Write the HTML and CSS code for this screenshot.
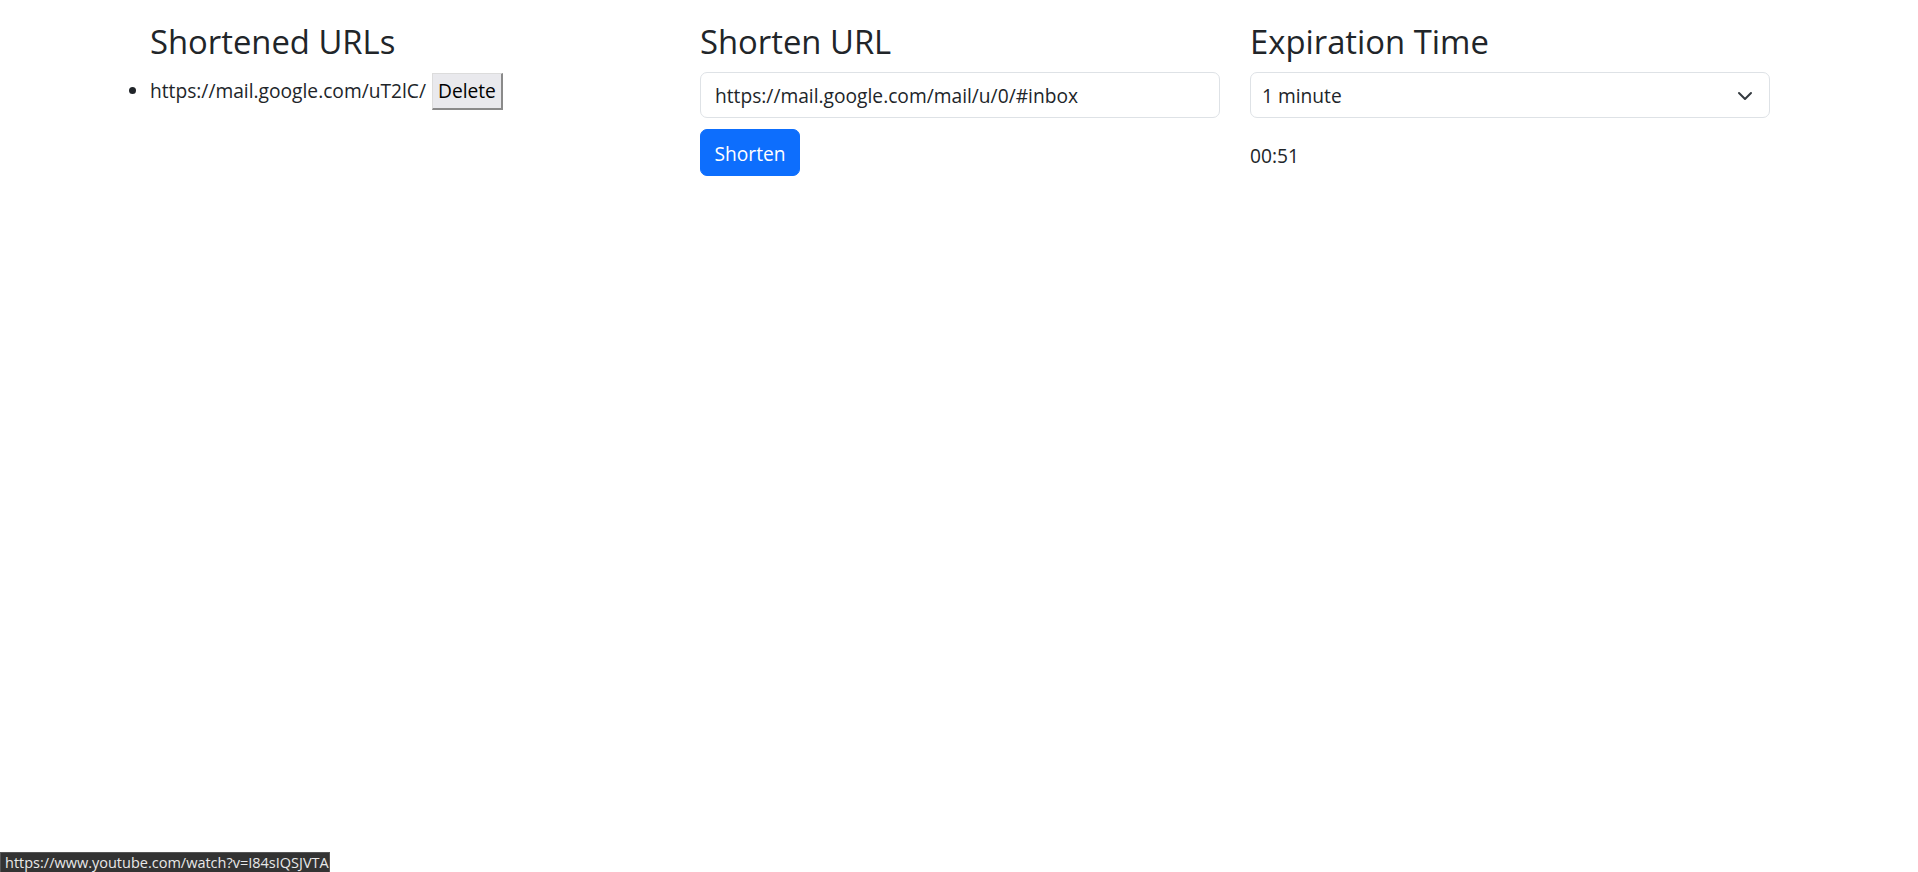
FILE: index.html
```html
<!DOCTYPE html>
<html lang="en">
<head>
<meta charset="utf-8">
<title>URL Shortener</title>
<link rel="stylesheet" href="styles.css">
</head>
<body>
<div class="page">
  <div class="row">
    <section class="col">
      <h2 class="title">Shortened URLs</h2>
      <ul class="url-list">
        <li class="url-item"><span class="url-text">https://mail.google.com/uT2lC/</span> <button class="btn-delete" type="button">Delete</button></li>
      </ul>
    </section>
    <section class="col">
      <h2 class="title">Shorten URL</h2>
      <div class="form-control">https://mail.google.com/mail/u/0/#inbox</div>
      <button class="btn-primary" type="button">Shorten</button>
    </section>
    <section class="col">
      <h2 class="title">Expiration Time</h2>
      <div class="form-select">
        <span>1 minute</span>
        <svg class="chevron" width="16" height="12" viewBox="0 0 16 12"><path d="M2 4l6 6 6-6" fill="none" stroke="#343a40" stroke-width="2" stroke-linecap="round" stroke-linejoin="round"/></svg>
      </div>
      <p class="timer">00:51</p>
    </section>
  </div>
</div>
<div class="status-bubble">https://www.youtube.com/watch?v=I84sIQSJVTA</div>
</body>
</html>
```
FILE: styles.css
```css
* { box-sizing: border-box; }
html, body { margin: 0; padding: 0; background: #fff; }
body {
  font-family: "Open Sans", "Noto Sans", sans-serif;
  font-size: 19.2px;
  line-height: 1.5;
  color: #212529;
}
.page {
  padding: 19px 0 0 135px;
}
.row {
  display: flex;
}
.col {
  width: 550px;
  padding: 0 15px;
}
.title {
  margin: 0 0 7px;
  font-size: 32.8px;
  font-weight: 400;
  line-height: 46px;
}
.url-list {
  margin: 0;
  padding: 0;
  list-style: disc outside;
}
.url-item {
  line-height: 37px;
}
.btn-delete {
  font-family: inherit;
  font-size: 19.2px;
  line-height: 1.5;
  color: #000;
  background: #e9e9ed;
  height: 37px;
  padding: 0 5px;
  margin-left: 1px;
  border-style: solid;
  border-width: 1px 2px 2px 1px;
  border-color: #dcdcdc #8a8a8a #8a8a8a #dcdcdc;
  border-radius: 0;
  vertical-align: baseline;
}
.form-control {
  height: 46px;
  width: 520px;
  border: 1px solid #dee2e6;
  border-radius: 7px;
  padding: 3px 14px 0;
  display: flex;
  align-items: center;
  color: #212529;
}
.btn-primary {
  margin-top: 11px;
  width: 100px;
  height: 47px;
  border: 1px solid #0d6efd;
  border-radius: 7px;
  background: #0d6efd;
  color: #fff;
  font-family: inherit;
  font-size: 19.2px;
  padding: 2px 0 0;
}
.form-select {
  height: 46px;
  width: 520px;
  border: 1px solid #dee2e6;
  border-radius: 7px;
  padding: 3px 16px 0 11px;
  display: flex;
  align-items: center;
  justify-content: space-between;
}
.chevron { display: block; margin-top: -3px; }
.timer {
  margin: 24px 0 0;
}
.status-bubble {
  position: fixed;
  left: 0;
  bottom: 0;
  height: 20px;
  width: 330px;
  padding: 0 4px;
  background: #333;
  border: 1px solid #555;
  border-bottom: 0;
  color: #e8e8e8;
  font-family: "Open Sans", "Noto Sans", sans-serif;
  font-size: 14.5px;
  line-height: 20px;
  white-space: nowrap;
  overflow: hidden;
}
```
